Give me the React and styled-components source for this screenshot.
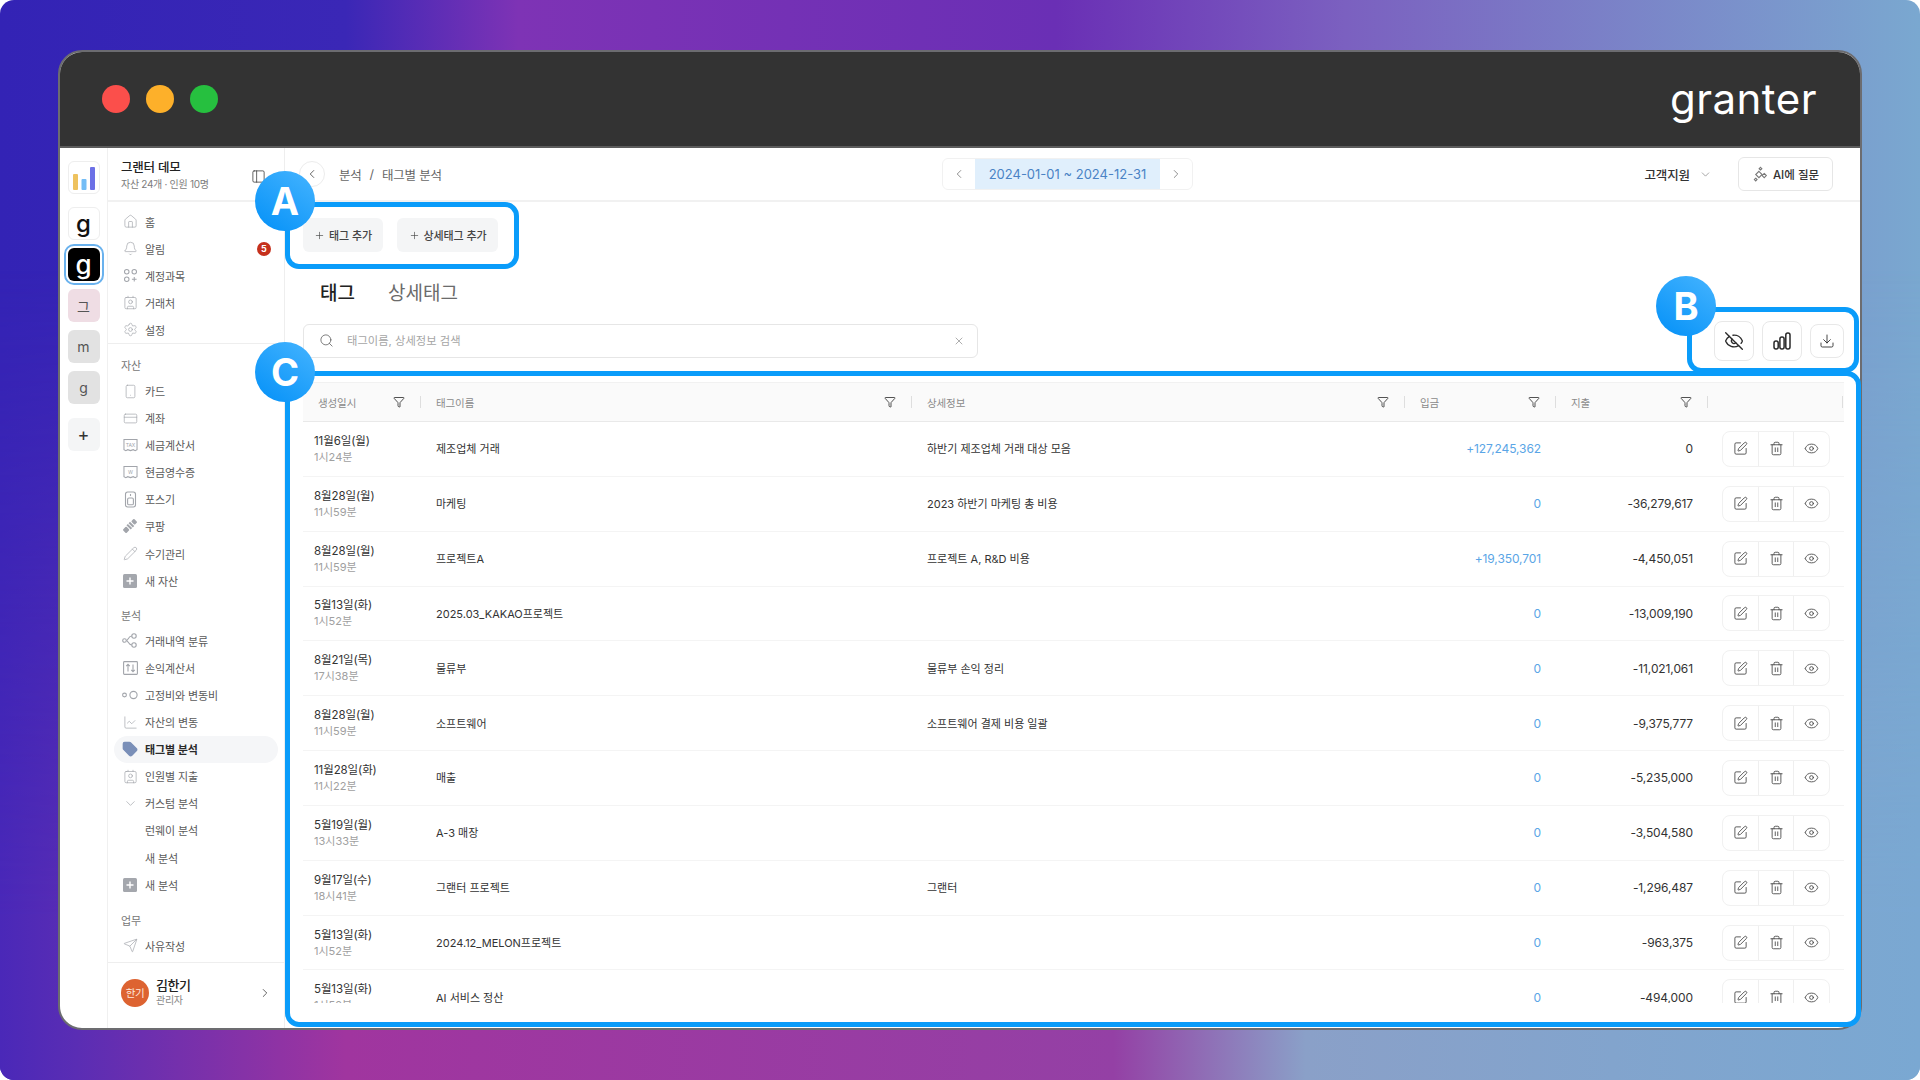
import React from "react";
import styled, { createGlobalStyle } from "styled-components";
import {
  Bell,
  ChartLine,
  ChevronDown,
  ChevronLeft,
  ChevronRight,
  Contact,
  CreditCard,
  Download,
  Eye,
  EyeOff,
  Filter,
  House,
  PanelLeft,
  Pencil,
  Plus,
  Search,
  Send,
  Settings,
  Smartphone,
  SquarePen,
  Tag,
  Trash2,
  X,
} from "lucide-react";

const FONT = `Inter, "Noto Sans CJK KR", sans-serif`;
const BLUE = "#0a9cfa";

const GlobalStyle = createGlobalStyle`
  html, body {
    margin: 0;
    background: #fff;
  }
  * {
    box-sizing: border-box;
  }
  body {
    font-family: ${FONT};
    color: #2b2b2b;
  }
`;

const Page = styled.div`
  position: relative;
  width: 1920px;
  height: 1080px;
  padding: 50px 58px 50px;
  overflow: hidden;
  border-radius: 14px;
  background: linear-gradient(
    90deg,
    #3323b5 0%,
    #3a27b6 18%,
    #7e33b5 27%,
    #6a2fb5 55%,
    #7b60c0 70%,
    #7aa8d0 100%
  );
  &::before {
    content: "";
    position: absolute;
    inset: 0;
    background: linear-gradient(
      90deg,
      #4a28b8 0%,
      #5a2db4 4%,
      #a0359f 18%,
      #9440a5 58%,
      #8aa0c8 68%,
      #7aa8d2 100%
    );
    mask-image: linear-gradient(180deg, transparent 25%, #000 85%);
  }
`;

const Window = styled.div`
  position: relative;
  display: flex;
  flex-direction: column;
  height: 980px;
  overflow: hidden;
  border: 2px solid #6c6c70;
  border-radius: 24px;
  background: #fff;
`;

const TitleBar = styled.div`
  flex: none;
  display: flex;
  align-items: center;
  justify-content: space-between;
  height: 96px;
  padding: 0 43px 0 42px;
  background: #333333;
  border-bottom: 2px solid #5c5c5c;
`;

const Dots = styled.div`
  display: flex;
  gap: 16px;
`;

const Dot = styled.span`
  width: 28px;
  height: 28px;
  border-radius: 50%;
  background: ${(p) => p.$color};
`;

const Wordmark = styled.span`
  font-size: 42px;
  font-weight: 400;
  line-height: 1;
  letter-spacing: 0.5px;
  color: #fff;
`;

const Body = styled.div`
  flex: 1;
  display: flex;
  min-height: 0;
`;

/* workspace rail */
const Rail = styled.nav`
  flex: none;
  display: flex;
  flex-direction: column;
  align-items: center;
  gap: 8px;
  width: 48px;
  padding-top: 13px;
  border-right: 1px solid #f0f0f0;
`;

const Tile = styled.div`
  flex: none;
  display: flex;
  align-items: center;
  justify-content: center;
  width: 32px;
  height: 33px;
  margin-bottom: ${(p) => p.$after || 0}px;
  border-radius: 6px;
  font-size: ${(p) => p.$size || 14}px;
  font-weight: ${(p) => p.$weight || 400};
  color: ${(p) => p.$color || "#555"};
  background: ${(p) => p.$bg || "#fff"};
  border: 1px solid ${(p) => p.$line || "transparent"};
  outline: ${(p) => (p.$active ? "2px solid #6ab2ee" : "none")};
  outline-offset: 2px;
`;

/* sidebar */
const Sidebar = styled.aside`
  flex: none;
  display: flex;
  flex-direction: column;
  width: 177px;
  border-right: 1px solid #eeeeee;
`;

const SideHead = styled.div`
  flex: none;
  display: flex;
  align-items: center;
  justify-content: space-between;
  height: 54px;
  padding: 4px 18px 0 13px;
  border-bottom: 2px solid #f1f1f1;
`;

const OrgName = styled.div`
  font-size: 12.5px;
  font-weight: 500;
  letter-spacing: -0.2px;
  line-height: 16px;
  color: #222;
`;

const OrgMeta = styled.div`
  font-size: 10px;
  letter-spacing: -0.3px;
  line-height: 16px;
  color: #7c7c7c;
`;

const NavGroup = styled.div`
  flex: none;
  padding: ${(p) => p.$top || 0}px 0 0;
  border-bottom: ${(p) => (p.$line ? "1px solid #eeeeee" : "none")};
`;

const NavLabel = styled.div`
  height: 21px;
  padding-left: 13px;
  font-size: 11px;
  line-height: 21px;
  color: #777;
`;

const NavItem = styled.div`
  display: flex;
  align-items: center;
  gap: 7px;
  height: 27.1px;
  margin: 0 6px;
  padding-left: 8px;
  padding-right: 8px;
  border-radius: 14px;
  font-size: 11px;
  letter-spacing: -0.1px;
  font-weight: ${(p) => (p.$active ? 600 : 400)};
  color: ${(p) => (p.$active ? "#2a2a2a" : "#5a5a5a")};
  background: ${(p) => (p.$active ? "#f5f6f8" : "transparent")};
`;

const NavIcon = styled.span`
  flex: none;
  display: flex;
  align-items: center;
  justify-content: center;
  width: 16px;
  height: 16px;
  color: #a2a5ab;
`;

const Count = styled.span`
  display: flex;
  align-items: center;
  justify-content: center;
  width: 14px;
  height: 14px;
  margin-left: auto;
  margin-right: -1px;
  border-radius: 50%;
  font-size: 9px;
  font-weight: 700;
  letter-spacing: 0;
  color: #fff;
  background: #c5301c;
`;

const Profile = styled.div`
  flex: 1;
  display: flex;
  align-items: center;
  gap: 7px;
  margin-top: 3px;
  padding: 0 12px 6px 13px;
  border-top: 1px solid #eeeeee;
`;

const Avatar = styled.span`
  display: flex;
  align-items: center;
  justify-content: center;
  width: 28px;
  height: 28px;
  border-radius: 50%;
  font-size: 10.5px;
  letter-spacing: -0.5px;
  color: #ffe9dd;
  background: #dd6331;
`;

const ProfileText = styled.div`
  flex: 1;
`;

const ProfileName = styled.div`
  font-size: 13px;
  font-weight: 500;
  letter-spacing: -0.4px;
  line-height: 16px;
  color: #222;
`;

const ProfileRole = styled.div`
  font-size: 10px;
  letter-spacing: -0.3px;
  line-height: 15px;
  color: #888;
`;

/* main column */
const Main = styled.main`
  flex: 1;
  min-width: 0;
  display: flex;
  flex-direction: column;
`;

const TopBar = styled.header`
  flex: none;
  display: grid;
  grid-template-columns: 643px 251px 1fr;
  align-items: center;
  height: 54px;
  padding: 0 27px 0 14px;
  border-bottom: 2px solid #f1f1f1;
`;

const Crumbs = styled.div`
  display: flex;
  align-items: center;
  gap: 8px;
  font-size: 12.5px;
  letter-spacing: -0.2px;
  color: #666;
`;

const BackButton = styled.span`
  display: flex;
  align-items: center;
  justify-content: center;
  width: 26px;
  height: 26px;
  margin-right: 6px;
  border: 1px solid #ececec;
  border-radius: 50%;
  color: #444;
`;

const DateNav = styled.div`
  display: flex;
  align-items: stretch;
  height: 32px;
  border: 1px solid #f1f1f1;
  border-radius: 6px;
  overflow: hidden;
`;

const DateArrow = styled.span`
  flex: 1;
  display: flex;
  align-items: center;
  justify-content: center;
  color: #777;
`;

const DateRange = styled.span`
  display: flex;
  align-items: center;
  justify-content: center;
  width: 185px;
  font-size: 13px;
  color: #4a83c5;
  background: #e0effc;
`;

const TopRight = styled.div`
  display: flex;
  align-items: center;
  justify-content: flex-end;
  gap: 26px;
`;

const Support = styled.div`
  display: flex;
  align-items: center;
  gap: 9px;
  font-size: 12.5px;
  font-weight: 500;
  letter-spacing: -0.1px;
  color: #333;
`;

const AskButton = styled.button`
  display: flex;
  align-items: center;
  justify-content: center;
  gap: 4px;
  width: 95px;
  height: 34px;
  padding: 0;
  border: 1px solid #e6e6e6;
  border-radius: 6px;
  font-family: ${FONT};
  font-size: 11.5px;
  font-weight: 500;
  color: #333;
  background: #fff;
`;

const Content = styled.div`
  flex: 1;
  min-height: 0;
  display: flex;
  flex-direction: column;
  padding: 16px 16px 25px 18px;
`;

const AddRow = styled.div`
  flex: none;
  display: flex;
  gap: 14px;
`;

const AddButton = styled.button`
  display: flex;
  align-items: center;
  justify-content: center;
  gap: 4px;
  width: ${(p) => p.$width}px;
  height: 34px;
  padding: 0;
  border: 0;
  border-radius: 6px;
  font-family: ${FONT};
  font-size: 11px;
  font-weight: 500;
  letter-spacing: -0.1px;
  color: #444;
  background: #f4f5f6;
`;

const Tabs = styled.div`
  flex: none;
  display: flex;
  gap: 33px;
  margin-top: 30px;
  padding-left: 17px;
`;

const TabItem = styled.span`
  font-size: 19px;
  line-height: 24px;
  font-weight: ${(p) => (p.$active ? 500 : 400)};
  color: ${(p) => (p.$active ? "#222" : "#6b6b6b")};
`;

const ToolRow = styled.div`
  flex: none;
  display: flex;
  align-items: center;
  justify-content: space-between;
  height: 39px;
  margin-top: 15px;
`;

const SearchBox = styled.label`
  display: flex;
  align-items: center;
  gap: 13px;
  width: 675px;
  height: 34px;
  padding: 0 12px 0 15px;
  border: 1px solid #e6e6e6;
  border-radius: 6px;
  color: #555;
`;

const SearchInput = styled.input`
  flex: 1;
  padding: 0;
  border: 0;
  outline: none;
  font-family: ${FONT};
  font-size: 11.3px;
  &::placeholder {
    color: #a5a5a5;
  }
`;

const Tools = styled.div`
  display: flex;
  align-items: center;
  gap: 8px;
`;

const ToolButton = styled.span`
  display: flex;
  align-items: center;
  justify-content: center;
  width: ${(p) => p.$size}px;
  height: ${(p) => p.$size}px;
  border: 1px solid #e8e8e8;
  border-radius: 8px;
  color: #2a2a2a;
  background: #fff;
`;

const TableWrap = styled.div`
  flex: 1;
  min-height: 0;
  margin-top: 22px;
  overflow: hidden;
`;

const GRID = "118px 491px 493px 151px 152px 136px";

const HeadRow = styled.div`
  display: grid;
  grid-template-columns: ${GRID};
  height: 40px;
  border-top: 1px solid #f1f1f1;
  border-bottom: 1px solid #e9e9e9;
  background: #fafafa;
`;

const HeadCell = styled.div`
  display: flex;
  align-items: center;
  padding-left: 15px;
  font-size: 10.5px;
  letter-spacing: -0.1px;
  color: #8a8a8a;
`;

const HeadLabel = styled.span`
  flex: 1;
`;

const FilterMark = styled.span`
  display: flex;
  margin-right: 15px;
  color: #333;
`;

const HeadDivider = styled.span`
  width: 1px;
  height: 12px;
  margin-right: ${(p) => p.$end || 0}px;
  background: #dedede;
`;

const Row = styled.div`
  display: grid;
  grid-template-columns: ${GRID};
  align-items: center;
  height: 54.85px;
  border-bottom: 1px solid #f4f4f4;
`;

const DateCell = styled.div`
  padding-left: 11px;
`;

const DateText = styled.div`
  font-size: 11.5px;
  line-height: 17px;
  letter-spacing: -0.1px;
  color: #333;
`;

const TimeText = styled.div`
  font-size: 11px;
  line-height: 15px;
  color: #a0a0a0;
`;

const TextCell = styled.div`
  padding: 0 0 1px 15px;
  font-size: 11px;
  color: #333;
`;

const AmountCell = styled.div`
  padding-right: 15px;
  text-align: right;
  font-size: 12px;
  letter-spacing: -0.1px;
  color: ${(p) => p.$color};
`;

const Actions = styled.div`
  display: flex;
  width: 108px;
  height: 36px;
  margin-left: 14px;
  border: 1px solid #f1f1f1;
  border-radius: 8px;
  color: #484848;
`;

const ActionCell = styled.span`
  flex: 1;
  display: flex;
  align-items: center;
  justify-content: center;
  border-left: ${(p) => (p.$first ? "0" : "1px solid #efefef")};
`;

/* annotation overlay */
const Callout = styled.div`
  position: absolute;
  left: ${(p) => p.$x}px;
  top: ${(p) => p.$y}px;
  width: ${(p) => p.$w}px;
  height: ${(p) => p.$h}px;
  border: 5px solid ${BLUE};
  border-radius: 14px;
  pointer-events: none;
`;

const Marker = styled.span`
  position: absolute;
  left: ${(p) => p.$x - 30}px;
  top: ${(p) => p.$y - 30}px;
  display: flex;
  align-items: center;
  justify-content: center;
  width: 60px;
  height: 60px;
  border-radius: 50%;
  font-size: 38px;
  font-weight: 700;
  color: #fff;
  background: linear-gradient(215deg, #45b4ff 0%, #0a94f8 90%);
`;

const ChartMark = () => (
  <svg width="24" height="26" viewBox="0 0 24 26">
    <rect x="1" y="9" width="5" height="16" rx="1" fill="#eec25e" />
    <rect x="9.5" y="14" width="5" height="11" rx="1" fill="#73bdf6" />
    <rect x="18" y="2" width="5" height="23" rx="1" fill="#6c70e6" />
  </svg>
);

const line = { fill: "none", stroke: "currentColor", strokeWidth: 1.1 };

const AccountIcon = () => (
  <svg width="15" height="15" viewBox="0 0 16 16" {...line}>
    <circle cx="4" cy="4" r="2.4" />
    <circle cx="12" cy="4" r="2.4" />
    <circle cx="4" cy="12" r="2.4" />
    <path d="M12 9.5v5M9.5 12h5" />
  </svg>
);

const BillIcon = ({ label }) => (
  <svg width="15" height="14" viewBox="0 0 16 15" {...line}>
    <path d="M1 1.5h14v11l-2 1-2-1-3 1-3-1-2 1-2-1z" />
    <text x="8" y="9.6" fontSize="5.4" textAnchor="middle" fill="currentColor" stroke="none" fontFamily="Inter, sans-serif">
      {label}
    </text>
  </svg>
);

const PosIcon = () => (
  <svg width="13" height="17" viewBox="0 0 13 17" {...line}>
    <rect x="1.5" y="1" width="10" height="15" rx="2.2" />
    <rect x="3.6" y="7" width="5.8" height="6.8" rx="1.4" />
    <path d="M6.5 3v2" />
  </svg>
);

const CouponIcon = () => (
  <svg width="16" height="16" viewBox="0 0 16 16">
    <g transform="rotate(-45 8 8)" fill="currentColor">
      <rect x="0" y="5.5" width="5" height="5" rx="1" />
      <rect x="6" y="5" width="2" height="6" />
      <rect x="9" y="5" width="2" height="6" />
      <rect x="12" y="5.5" width="4" height="5" rx="1" />
    </g>
  </svg>
);

const PlusSquare = () => (
  <svg width="14" height="14" viewBox="0 0 14 14">
    <rect width="14" height="14" rx="1.5" fill="#a4a7ad" />
    <path d="M7 3.5v7M3.5 7h7" stroke="#fff" strokeWidth="1.4" />
  </svg>
);

const NodesIcon = () => (
  <svg width="16" height="15" viewBox="0 0 16 15" {...line}>
    <circle cx="2.5" cy="7.5" r="1.8" />
    <circle cx="12" cy="3" r="2.2" />
    <circle cx="12" cy="12" r="2.2" />
    <path d="M4.3 7.5c2 0 2-4.5 5.5-4.5M4.3 7.5c2 0 2 4.5 5.5 4.5" />
  </svg>
);

const ProfitIcon = () => (
  <svg width="15" height="14" viewBox="0 0 15 14" {...line}>
    <rect x="0.6" y="0.6" width="13.8" height="12.8" rx="0.8" />
    <path d="M5 10.5v-7M3.2 5.2 5 3.4l1.8 1.8M10 3.5v7M8.2 8.8 10 10.6l1.8-1.8" />
  </svg>
);

const FixedIcon = () => (
  <svg width="16" height="10" viewBox="0 0 16 10" {...line}>
    <circle cx="2.5" cy="5" r="1.9" />
    <circle cx="11.5" cy="5" r="3.6" />
  </svg>
);

const BarsIcon = () => (
  <svg width="18" height="18" viewBox="0 0 18 18" fill="none" stroke="currentColor" strokeWidth="1.5">
    <rect x="1" y="9" width="4.2" height="8" rx="2" />
    <rect x="6.9" y="5" width="4.2" height="12" rx="2" />
    <rect x="12.8" y="1" width="4.2" height="16" rx="2" />
  </svg>
);

const SparkIcon = () => (
  <svg width="17" height="17" viewBox="0 0 16 16" fill="none" stroke="#777" strokeWidth="1">
    <path d="M6.5 5 9.5 8 6.5 11 3.5 8z" />
    <path d="M11.5 7 13.5 9 11.5 11 9.5 9z" />
    <path d="M8 1.2 9.3 2.5 8 3.8 6.7 2.5z" />
    <path d="M3.5 11.5 4.8 12.8 3.5 14.1 2.2 12.8z" />
  </svg>
);

const ic = { size: 15, strokeWidth: 1.1 };

const NAV_TOP = [
  { icon: <House {...ic} />, label: "홈" },
  { icon: <Bell {...ic} />, label: "알림", count: 5 },
  { icon: <AccountIcon />, label: "계정과목" },
  { icon: <Contact {...ic} />, label: "거래처" },
  { icon: <Settings {...ic} />, label: "설정" },
];

const NAV_ASSETS = [
  { icon: <Smartphone {...ic} />, label: "카드" },
  { icon: <CreditCard {...ic} />, label: "계좌" },
  { icon: <BillIcon label="TAX" />, label: "세금계산서" },
  { icon: <BillIcon label="W" />, label: "현금영수증" },
  { icon: <PosIcon />, label: "포스기" },
  { icon: <CouponIcon />, label: "쿠팡" },
  { icon: <Pencil {...ic} />, label: "수기관리" },
  { icon: <PlusSquare />, label: "새 자산" },
];

const NAV_REPORTS = [
  { icon: <NodesIcon />, label: "거래내역 분류" },
  { icon: <ProfitIcon />, label: "손익계산서" },
  { icon: <FixedIcon />, label: "고정비와 변동비" },
  { icon: <ChartLine {...ic} />, label: "자산의 변동" },
  { icon: <Tag size={16} fill="#7a8fb8" stroke="#7a8fb8" />, label: "태그별 분석", active: true },
  { icon: <Contact {...ic} />, label: "인원별 지출" },
  { icon: <ChevronDown {...ic} />, label: "커스텀 분석" },
  { label: "런웨이 분석" },
  { label: "새 분석" },
  { icon: <PlusSquare />, label: "새 분석" },
];

const NAV_WORK = [{ icon: <Send {...ic} />, label: "사유작성" }];

const COLUMNS = ["생성일시", "태그이름", "상세정보", "입금", "지출"];

const ROWS = [
  ["11월6일(월)", "1시24분", "제조업체 거래", "하반기 제조업체 거래 대상 모음", "+127,245,362", "0"],
  ["8월28일(월)", "11시59분", "마케팅", "2023 하반기 마케팅 총 비용", "0", "-36,279,617"],
  ["8월28일(월)", "11시59분", "프로젝트A", "프로젝트 A, R&D 비용", "+19,350,701", "-4,450,051"],
  ["5월13일(화)", "1시52분", "2025.03_KAKAO프로젝트", "", "0", "-13,009,190"],
  ["8월21일(목)", "17시38분", "물류부", "물류부 손익 정리", "0", "-11,021,061"],
  ["8월28일(월)", "11시59분", "소프트웨어", "소프트웨어 결제 비용 일괄", "0", "-9,375,777"],
  ["11월28일(화)", "11시22분", "매출", "", "0", "-5,235,000"],
  ["5월19일(월)", "13시33분", "A-3 매장", "", "0", "-3,504,580"],
  ["9월17일(수)", "18시41분", "그랜터 프로젝트", "그랜터", "0", "-1,296,487"],
  ["5월13일(화)", "1시52분", "2024.12_MELON프로젝트", "", "0", "-963,375"],
  ["5월13일(화)", "1시52분", "AI 서비스 정산", "", "0", "-494,000"],
];

const NavList = ({ items }) =>
  items.map((item, i) => (
    <NavItem key={i} $active={item.active}>
      <NavIcon>{item.icon}</NavIcon>
      {item.label}
      {item.count && <Count>{item.count}</Count>}
    </NavItem>
  ));

const App = () => {
  return (
    <>
      <GlobalStyle />
      <Page>
        <Window>
          <TitleBar>
            <Dots>
              <Dot $color="#fb4f4b" />
              <Dot $color="#fdb02a" />
              <Dot $color="#26c03f" />
            </Dots>
            <Wordmark>granter</Wordmark>
          </TitleBar>
          <Body>
            <Rail>
              <Tile $line="#eeeeee" $after={5}>
                <ChartMark />
              </Tile>
              <Tile $line="#eeeeee" $size={24} $weight={500} $color="#111">
                g
              </Tile>
              <Tile $bg="#000" $color="#fff" $size={26} $weight={500} $active>
                g
              </Tile>
              <Tile $bg="#efdde4">그</Tile>
              <Tile $bg="#e2e2e2">m</Tile>
              <Tile $bg="#e2e2e2" $after={6}>
                g
              </Tile>
              <Tile $bg="#f4f5f6" $size={18} $color="#333">
                +
              </Tile>
            </Rail>
            <Sidebar>
              <SideHead>
                <div>
                  <OrgName>그랜터 데모</OrgName>
                  <OrgMeta>자산 24개 · 인원 10명</OrgMeta>
                </div>
                <PanelLeft size={15} strokeWidth={1.2} color="#333" />
              </SideHead>
              <NavGroup $top={6} $line>
                <NavList items={NAV_TOP} />
              </NavGroup>
              <NavGroup $top={12}>
                <NavLabel>자산</NavLabel>
                <NavList items={NAV_ASSETS} />
              </NavGroup>
              <NavGroup $top={12}>
                <NavLabel>분석</NavLabel>
                <NavList items={NAV_REPORTS} />
              </NavGroup>
              <NavGroup $top={13}>
                <NavLabel>업무</NavLabel>
                <NavList items={NAV_WORK} />
              </NavGroup>
              <Profile>
                <Avatar>한기</Avatar>
                <ProfileText>
                  <ProfileName>김한기</ProfileName>
                  <ProfileRole>관리자</ProfileRole>
                </ProfileText>
                <ChevronRight size={14} strokeWidth={1.4} color="#444" />
              </Profile>
            </Sidebar>
            <Main>
              <TopBar>
                <Crumbs>
                  <BackButton>
                    <ChevronLeft size={14} strokeWidth={1.4} />
                  </BackButton>
                  <span>분석</span>
                  <span>/</span>
                  <span>태그별 분석</span>
                </Crumbs>
                <DateNav>
                  <DateArrow>
                    <ChevronLeft size={14} strokeWidth={1.4} />
                  </DateArrow>
                  <DateRange>2024-01-01 ~ 2024-12-31</DateRange>
                  <DateArrow>
                    <ChevronRight size={14} strokeWidth={1.4} />
                  </DateArrow>
                </DateNav>
                <TopRight>
                  <Support>
                    고객지원
                    <ChevronDown size={13} strokeWidth={1.2} color="#777" />
                  </Support>
                  <AskButton>
                    <SparkIcon />
                    AI에 질문
                  </AskButton>
                </TopRight>
              </TopBar>
              <Content>
                <AddRow>
                  <AddButton $width={80}>
                    <Plus size={11} strokeWidth={1.4} />
                    태그 추가
                  </AddButton>
                  <AddButton $width={101}>
                    <Plus size={11} strokeWidth={1.4} />
                    상세태그 추가
                  </AddButton>
                </AddRow>
                <Tabs>
                  <TabItem $active>태그</TabItem>
                  <TabItem>상세태그</TabItem>
                </Tabs>
                <ToolRow>
                  <SearchBox>
                    <Search size={15} strokeWidth={1.2} />
                    <SearchInput placeholder="태그이름, 상세정보 검색" />
                    <X size={12} strokeWidth={1.2} color="#777" />
                  </SearchBox>
                  <Tools>
                    <ToolButton $size={40}>
                      <EyeOff size={20} strokeWidth={1.6} />
                    </ToolButton>
                    <ToolButton $size={40}>
                      <BarsIcon />
                    </ToolButton>
                    <ToolButton $size={34}>
                      <Download size={16} strokeWidth={1.3} />
                    </ToolButton>
                  </Tools>
                </ToolRow>
                <TableWrap>
                  <HeadRow>
                    {COLUMNS.map((label) => (
                      <HeadCell key={label}>
                        <HeadLabel>{label}</HeadLabel>
                        <FilterMark>
                          <Filter size={12} strokeWidth={1.7} />
                        </FilterMark>
                        <HeadDivider />
                      </HeadCell>
                    ))}
                    <HeadCell>
                      <HeadLabel />
                      <HeadDivider $end={1} />
                    </HeadCell>
                  </HeadRow>
                  {ROWS.map((row, i) => (
                    <Row key={i}>
                      <DateCell>
                        <DateText>{row[0]}</DateText>
                        <TimeText>{row[1]}</TimeText>
                      </DateCell>
                      <TextCell>{row[2]}</TextCell>
                      <TextCell>{row[3]}</TextCell>
                      <AmountCell $color="#5aa5e6">{row[4]}</AmountCell>
                      <AmountCell $color="#333">{row[5]}</AmountCell>
                      <Actions>
                        <ActionCell $first>
                          <SquarePen size={15} strokeWidth={1.4} />
                        </ActionCell>
                        <ActionCell>
                          <Trash2 size={15} strokeWidth={1.4} />
                        </ActionCell>
                        <ActionCell>
                          <Eye size={15} strokeWidth={1.4} />
                        </ActionCell>
                      </Actions>
                    </Row>
                  ))}
                </TableWrap>
              </Content>
            </Main>
          </Body>
        </Window>
        <Callout $x={285} $y={202} $w={234} $h={67} />
        <Callout $x={1687} $y={307} $w={172} $h={66} />
        <Callout $x={285} $y={371} $w={1576} $h={656} />
        <Marker $x={285} $y={201}>A</Marker>
        <Marker $x={1686} $y={306}>B</Marker>
        <Marker $x={285} $y={372}>C</Marker>
      </Page>
    </>
  );
};

export default App;
